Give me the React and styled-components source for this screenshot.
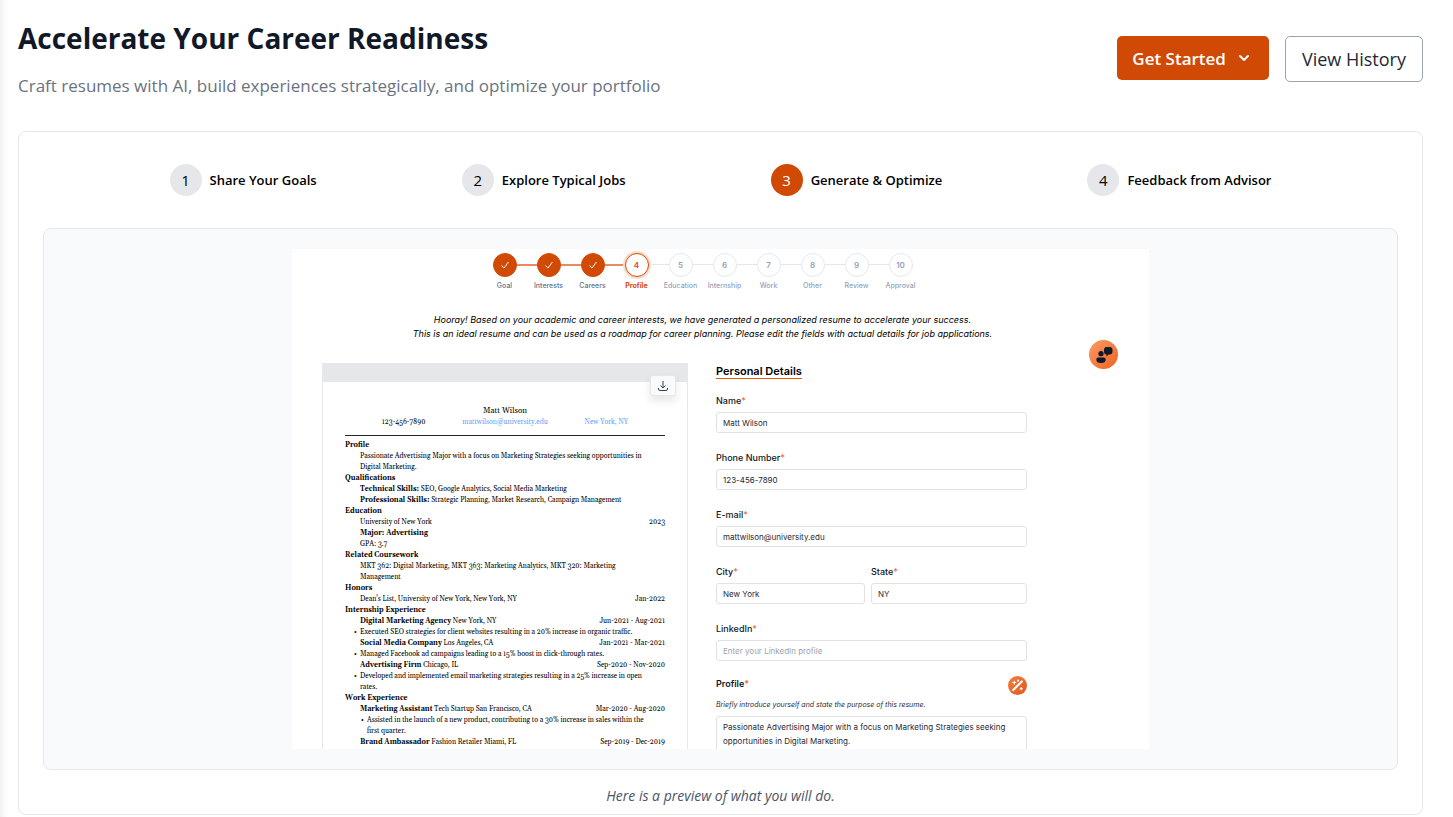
import React from "react";
import styled, { createGlobalStyle } from "styled-components";

const steps = [
  "Share Your Goals",
  "Explore Typical Jobs",
  "Generate & Optimize",
  "Feedback from Advisor",
];

const stages = [
  "Goal",
  "Interests",
  "Careers",
  "Profile",
  "Education",
  "Internship",
  "Work",
  "Other",
  "Review",
  "Approval",
];

const currentStage = 3;

function Field({ id, label, tight, ...rest }) {
  return (
    <FieldStyled $tight={tight}>
      <Label htmlFor={id}>
        {label}
        <span>*</span>
      </Label>
      <Input id={id} {...rest} />
    </FieldStyled>
  );
}

function Stages() {
  return (
    <StageList>
      {stages.map((name, i) => (
        <Stage key={name} $done={i < currentStage} $current={i === currentStage}>
          <div className="dot">
            {i < currentStage ? (
              <svg width="10" height="10" viewBox="0 0 10 10" aria-hidden="true">
                <path d="M1.5 5.5 4 8 8.5 2" fill="none" stroke="#fff" />
              </svg>
            ) : (
              i + 1
            )}
          </div>
          <span>{name}</span>
        </Stage>
      ))}
    </StageList>
  );
}

function Resume() {
  return (
    <ResumeStyled>
      <div className="bar"></div>
      <DownloadButton type="button" aria-label="Download resume">
        <svg width="12" height="12" viewBox="0 0 12 12" aria-hidden="true">
          <path
            d="M6 1v7M3.5 5.5 6 8l2.5-2.5M1.5 8v1q0 1.500 1.500 1.500h6q1.500 0 1.500-1.500V8"
            fill="none"
            stroke="#374151"
          />
        </svg>
      </DownloadButton>
      <Sheet>
        <h3>Matt Wilson</h3>
        <div className="contact">
          <span>123-456-7890</span>
          <a href="mailto:mattwilson@university.edu">mattwilson@university.edu</a>
          <a href="#location">New York, NY</a>
        </div>
        <h4>Profile</h4>
        <p>
          Passionate Advertising Major with a focus on Marketing Strategies seeking opportunities in
          <br />
          Digital Marketing.
        </p>
        <h4>Qualifications</h4>
        <p>
          <b>Technical Skills:</b> SEO, Google Analytics, Social Media Marketing
        </p>
        <p>
          <b>Professional Skills:</b> Strategic Planning, Market Research, Campaign Management
        </p>
        <h4>Education</h4>
        <Entry>
          <span>University of New York</span>
          <span>2023</span>
        </Entry>
        <p>
          <b>Major: Advertising</b>
        </p>
        <p>GPA: 3.7</p>
        <h4>Related Coursework</h4>
        <p>
          MKT 362: Digital Marketing, MKT 363: Marketing Analytics, MKT 320: Marketing
          <br />
          Management
        </p>
        <h4>Honors</h4>
        <Entry>
          <span>Dean's List, University of New York, New York, NY</span>
          <span>Jan-2022</span>
        </Entry>
        <h4>Internship Experience</h4>
        <Entry>
          <span>
            <b>Digital Marketing Agency</b> New York, NY
          </span>
          <span>Jun-2021 - Aug-2021</span>
        </Entry>
        <Bullet>
          Executed SEO strategies for client websites resulting in a 20% increase in organic traffic.
        </Bullet>
        <Entry>
          <span>
            <b>Social Media Company</b> Los Angeles, CA
          </span>
          <span>Jan-2021 - Mar-2021</span>
        </Entry>
        <Bullet>Managed Facebook ad campaigns leading to a 15% boost in click-through rates.</Bullet>
        <Entry>
          <span>
            <b>Advertising Firm</b> Chicago, IL
          </span>
          <span>Sep-2020 - Nov-2020</span>
        </Entry>
        <Bullet>
          Developed and implemented email marketing strategies resulting in a 25% increase in open
          <br />
          rates.
        </Bullet>
        <h4>Work Experience</h4>
        <Entry>
          <span>
            <b>Marketing Assistant</b> Tech Startup San Francisco, CA
          </span>
          <span>Mar-2020 - Aug-2020</span>
        </Entry>
        <Bullet $deep>
          Assisted in the launch of a new product, contributing to a 30% increase in sales within the
          <br />
          first quarter.
        </Bullet>
        <Entry>
          <span>
            <b>Brand Ambassador</b> Fashion Retailer Miami, FL
          </span>
          <span>Sep-2019 - Dec-2019</span>
        </Entry>
      </Sheet>
    </ResumeStyled>
  );
}

function Details() {
  return (
    <DetailsStyled>
      <h3>Personal Details</h3>
      <Field id="name" label="Name" defaultValue="Matt Wilson" />
      <Field id="phone" label="Phone Number" type="tel" defaultValue="123-456-7890" />
      <Field id="email" label="E-mail" type="email" defaultValue="mattwilson@university.edu" />
      <div className="pair">
        <Field id="city" label="City" defaultValue="New York" />
        <Field id="state" label="State" defaultValue="NY" />
      </div>
      <Field id="linkedin" label="LinkedIn" placeholder="Enter your LinkedIn profile" tight />
      <div className="profile-head">
        <Label htmlFor="profile" $strong>
          Profile<span>*</span>
        </Label>
        <RoundButton type="button" aria-label="Rewrite with AI" $size={19}>
          <svg width="15" height="15" viewBox="0 0 14 14" aria-hidden="true">
            <path d="M3 11.200 11 3.200" stroke="#fff" strokeWidth="2" strokeLinecap="round" />
            <path
              d="M4 2.500v3.500M2.200 4.200h3.600M10.500 8.500v3M9 10h3M7.500 1.500v2M6.500 2.500h2"
              stroke="#fff"
            />
          </svg>
        </RoundButton>
      </div>
      <p className="hint">Briefly introduce yourself and state the purpose of this resume.</p>
      <TextArea
        id="profile"
        defaultValue={
          "Passionate Advertising Major with a focus on Marketing Strategies seeking\nopportunities in Digital Marketing."
        }
      />
    </DetailsStyled>
  );
}

export default function App() {
  return (
    <Page>
      <GlobalStyle />
      <Header>
        <div>
          <h1>Accelerate Your Career Readiness</h1>
          <p>Craft resumes with AI, build experiences strategically, and optimize your portfolio</p>
        </div>
        <div className="actions">
          <Button type="button" $primary>
            Get Started
            <svg width="12" height="8" viewBox="0 0 12 8" aria-hidden="true">
              <path
                d="M2 2l4 4 4-4"
                fill="none"
                stroke="#fff"
                strokeWidth="2"
                strokeLinecap="round"
                strokeLinejoin="round"
              />
            </svg>
          </Button>
          <Button type="button">View History</Button>
        </div>
      </Header>
      <Card>
        <StepList>
          {steps.map((step, i) => (
            <Step key={step} $active={i === 2}>
              <span className="number">{i + 1}</span>
              {step}
            </Step>
          ))}
        </StepList>
        <Panel>
          <Preview>
            <Stages />
            <Intro>
              Hooray! Based on your academic and career interests, we have generated a personalized
              resume to accelerate your success.
              <br />
              This is an ideal resume and can be used as a roadmap for career planning. Please edit
              the fields with actual details for job applications.
            </Intro>
            <Columns>
              <Resume />
              <Details />
            </Columns>
            <AdvisorButton type="button" aria-label="Ask an advisor" $size={29}>
              <svg width="18" height="18" viewBox="0 0 18 18" aria-hidden="true">
                <circle cx="6" cy="7.700" r="2.600" fill="#111827" />
                <path
                  d="M1.300 13.500q0-2 2-2h5.400q2 0 2 2 0 3.500-4.700 3.500t-4.700-3.500z"
                  fill="#111827"
                />
                <path
                  d="M11.500 1h3Q17.500 1 17.500 4v1.500q0 3-3 3h-1l-2 2.200V8.500Q9 8.500 9 5.500V4q0-3 2.500-3z"
                  fill="#111827"
                />
              </svg>
            </AdvisorButton>
          </Preview>
        </Panel>
        <Caption>Here is a preview of what you will do.</Caption>
      </Card>
    </Page>
  );
}

const GlobalStyle = createGlobalStyle`
  * {
    box-sizing: border-box;
  }

  body {
    margin: 0;
    background-color: #fff;
    font-family: "Segoe UI", "Open Sans", sans-serif;
    color: #000;
  }

  h1, h3, h4, p, ol {
    margin: 0;
    padding: 0;
  }

  button, input, textarea {
    font-family: inherit;
  }
`;

const Page = styled.main`
  padding: 20px 30px 2px 18px;
  box-shadow: inset 8px 0 8px -8px rgba(0, 0, 0, 0.12);
`;

const Header = styled.header`
  display: flex;
  justify-content: space-between;
  align-items: flex-start;
  margin-bottom: 31px;

  h1 {
    font-size: 28px;
    line-height: 36px;
    font-weight: 700;
    color: #111827;
  }

  p {
    margin-top: 16px;
    font-size: 17px;
    line-height: 28px;
    color: #6b7280;
  }

  .actions {
    display: flex;
    align-items: flex-start;
    gap: 16px;
    padding-top: 16px;
  }
`;

const Button = styled.button`
  display: flex;
  align-items: center;
  gap: 12px;
  height: ${(props) => (props.$primary ? "44px" : "46px")};
  padding: ${(props) => (props.$primary ? "0 19px 0 15px" : "0 16px")};
  border: ${(props) => (props.$primary ? "none" : "1px solid #9ca3af")};
  border-radius: 5px;
  background-color: ${(props) => (props.$primary ? "#d04a06" : "#fff")};
  color: ${(props) => (props.$primary ? "#fff" : "#1f2937")};
  font-size: ${(props) => (props.$primary ? "17px" : "18px")};
  font-weight: ${(props) => (props.$primary ? 600 : 500)};
  white-space: nowrap;
`;

const Card = styled.section`
  padding: 32px 24px 8px;
  border: 1px solid #e5e7eb;
  border-radius: 8px;
`;

const StepList = styled.ol`
  display: flex;
  justify-content: space-between;
  max-width: 1102px;
  margin: 0 auto 32px;
  list-style: none;
`;

const Step = styled.li`
  display: flex;
  align-items: center;
  gap: 8px;
  font-size: 13px;
  font-weight: 600;

  .number {
    display: flex;
    align-items: center;
    justify-content: center;
    width: 32px;
    height: 32px;
    border-radius: 50%;
    background-color: ${(props) => (props.$active ? "#d04a06" : "#e5e7eb")};
    color: ${(props) => (props.$active ? "#fff" : "#000")};
    font-size: 15px;
    font-weight: 400;
  }
`;

const Panel = styled.div`
  display: flex;
  justify-content: center;
  padding: 20px;
  border: 1px solid #e5e7eb;
  border-radius: 8px;
  background-color: #f9fafb;
`;

const Preview = styled.div`
  position: relative;
  width: 100%;
  max-width: 857px;
  height: 500px;
  overflow: hidden;
  background-color: #fff;
  font-family: Inter, sans-serif;
`;

const StageList = styled.ol`
  display: flex;
  justify-content: center;
  padding: 4px 36px 0 0;
  list-style: none;
`;

const Stage = styled.li`
  position: relative;
  display: flex;
  flex-direction: column;
  align-items: center;
  width: 44px;
  font-size: 7px;
  line-height: 10px;
  font-weight: ${(props) => (props.$current ? 700 : 500)};
  color: ${(props) => (props.$current ? "#d9480f" : props.$done ? "#64748b" : "#94a3b8")};

  .dot {
    display: flex;
    align-items: center;
    justify-content: center;
    width: 24px;
    height: 24px;
    margin-bottom: 4px;
    border: 1px solid ${(props) => (props.$done || props.$current ? "#d04a06" : "#e2e8f0")};
    border-radius: 50%;
    background-color: ${(props) => (props.$done ? "#d04a06" : "#fff")};
    box-shadow: ${(props) => (props.$current ? "0 0 0 2px #fbdccd" : "none")};
    font-size: 8px;
    font-weight: 600;
  }

  /* line to the next stage */
  &:not(:last-child)::after {
    content: "";
    position: absolute;
    top: 11px;
    left: 34px;
    width: 20px;
    height: ${(props) => (props.$done ? "2px" : "1px")};
    background-color: ${(props) => (props.$done ? "#ea8a5f" : "#e2e8f0")};
  }
`;

const Intro = styled.p`
  margin-top: 22px;
  padding-right: 36px;
  text-align: center;
  font-size: 9px;
  line-height: 14px;
  font-style: italic;
  font-weight: 400;
`;

const Columns = styled.div`
  display: grid;
  grid-template-columns: 366px 311px;
  align-items: start;
  gap: 28px;
  padding: 22px 0 0 30px;
`;

const ResumeStyled = styled.article`
  position: relative;
  border: 1px solid #e5e7eb;

  .bar {
    height: 18px;
    background-color: #e5e7eb;
  }
`;

const DownloadButton = styled.button`
  position: absolute;
  top: 11px;
  right: 11px;
  display: flex;
  align-items: center;
  justify-content: center;
  width: 26px;
  height: 21px;
  padding: 0;
  border: 1px solid #e5e7eb;
  border-radius: 3px;
  background-color: #f9fafb;
  box-shadow: 0 5px 10px rgba(0, 0, 0, 0.1);
`;

const Sheet = styled.div`
  padding: 23px 22px 24px;
  font-family: Georgia, Gelasio, "Liberation Serif", serif;
  font-size: 7px;
  line-height: 11px;
  white-space: nowrap;

  h3 {
    font-size: 8px;
    line-height: 12px;
    font-weight: 400;
    text-align: center;
  }

  .contact {
    display: flex;
    justify-content: space-evenly;
    height: 19px;
    margin-bottom: 4px;
    border-bottom: 1px solid #222;
  }

  .contact a {
    color: #60a5fa;
    text-decoration: none;
  }

  h4 {
    font-size: 7px;
    font-weight: 700;
  }

  p {
    padding-left: 15px;
  }
`;

const Entry = styled.div`
  display: flex;
  justify-content: space-between;
  padding-left: 15px;
`;

const Bullet = styled.div`
  display: list-item;
  margin-left: ${(props) => (props.$deep ? "22px" : "15px")};
  list-style: disc outside;

  &::marker {
    content: "•  ";
  }
`;

const DetailsStyled = styled.form`
  h3 {
    width: fit-content;
    margin-bottom: 16px;
    padding-top: 1px;
    border-bottom: 1px solid #ea580c;
    font-size: 11px;
    line-height: 14px;
    font-weight: 600;
  }

  .pair {
    display: grid;
    grid-template-columns: 149px 1fr;
    gap: 6px;
  }

  .profile-head {
    display: flex;
    align-items: center;
    justify-content: space-between;
  }

  .hint {
    margin: 5px 0 6px;
    font-size: 7px;
    line-height: 10px;
    font-style: italic;
    color: #1f2937;
  }
`;

const FieldStyled = styled.div`
  margin-bottom: ${(props) => (props.$tight ? "15px" : "19px")};
`;

const Label = styled.label`
  display: block;
  margin-bottom: ${(props) => (props.$strong ? "3px" : "5px")};
  font-size: 9px;
  line-height: 12px;
  font-weight: ${(props) => (props.$strong ? 600 : 500)};
  color: #111827;

  span {
    color: #f26a2e;
  }
`;

const Input = styled.input`
  display: block;
  width: 100%;
  height: 21px;
  padding: 0 6px;
  border: 1px solid #e0e2e6;
  border-radius: 3px;
  background-color: #fff;
  font-size: 8px;
  color: #1f2937;

  &::placeholder {
    color: #9ca3af;
  }
`;

const TextArea = styled.textarea`
  display: block;
  width: 100%;
  height: 60px;
  padding: 3px 6px;
  border: 1px solid #e0e2e6;
  border-radius: 3px;
  resize: none;
  font-size: 8px;
  line-height: 14px;
  color: #1f2937;
`;

const RoundButton = styled.button`
  display: flex;
  align-items: center;
  justify-content: center;
  width: ${(props) => props.$size}px;
  height: ${(props) => props.$size}px;
  padding: 0;
  border: none;
  border-radius: 50%;
  background: linear-gradient(135deg, #f0803f, #e4571b);
`;

const AdvisorButton = styled(RoundButton)`
  position: absolute;
  top: 91px;
  right: 31px;
  background: linear-gradient(135deg, #fa9a68, #ee6420);
`;

const Caption = styled.p`
  margin-top: 16px;
  text-align: center;
  font-size: 14px;
  line-height: 20px;
  font-style: italic;
  color: #4b5563;
`;
